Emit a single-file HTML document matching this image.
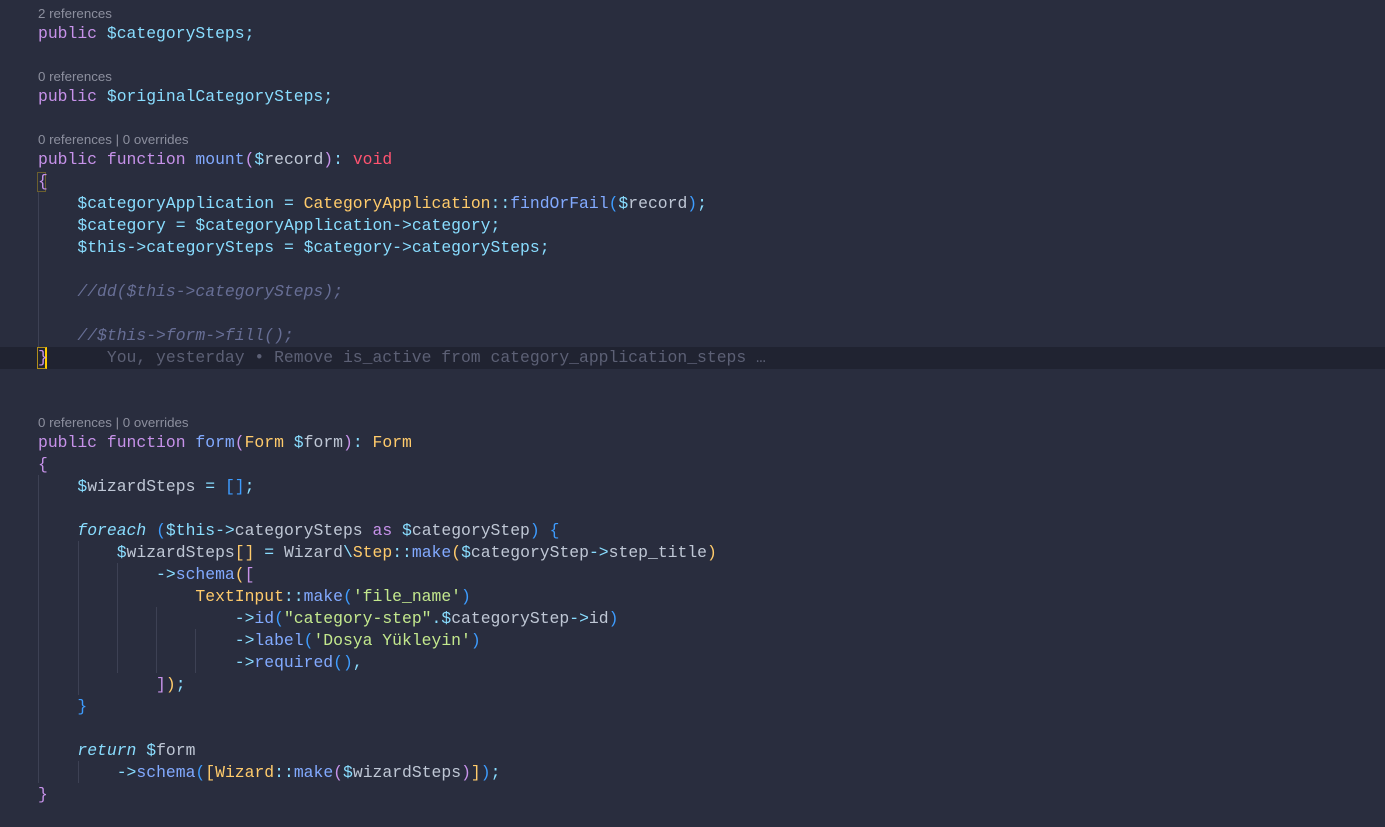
<!DOCTYPE html>
<html><head><meta charset="utf-8"><style>
html,body{margin:0;padding:0;background:#292d3e;width:1385px;height:827px;overflow:hidden}
.l{position:absolute;left:38px;height:22px;line-height:22px;font-family:"Liberation Mono",monospace;font-size:16.4px;white-space:pre;color:#bfc7d5;margin-top:1px}
.c{position:absolute;left:38px;height:19px;line-height:19px;font-family:"Liberation Sans",sans-serif;font-size:13.3px;color:#8c8f9e;white-space:pre}
.k{color:#c792ea}.v{color:#89ddff}.w{color:#bcc4dc}.f{color:#82aaff}.r{color:#ff5370}.y{color:#ffcb6b}.s{color:#c3e88d}.o{color:#89ddff}
.cm{color:#676e95;font-style:italic}.it{font-style:italic;color:#89ddff}.p{color:#c792ea}.b{color:#3d9cff}.g{color:#5c6075}
.guide{position:absolute;width:1px;background:#3d4154}
</style></head><body>
<div style="position:absolute;left:0;top:347px;width:1385px;height:22px;background:#202331"></div>
<div class="guide" style="left:38px;top:192px;height:155px"></div>
<div class="guide" style="left:38px;top:475px;height:308px"></div>
<div class="guide" style="left:78px;top:541px;height:154px"></div>
<div class="guide" style="left:78px;top:761px;height:22px"></div>
<div class="guide" style="left:117px;top:563px;height:110px"></div>
<div class="guide" style="left:156px;top:607px;height:66px"></div>
<div class="guide" style="left:195px;top:629px;height:44px"></div>
<div style="position:absolute;left:37px;top:172px;width:9px;height:20px;border:1px solid #6b5f2e;box-sizing:border-box"></div>
<div style="position:absolute;left:37px;top:347px;width:10px;height:22px;border:1px solid #b08d1a;border-right:2px solid #ffcc00;box-sizing:border-box"></div>

<div class="c" style="top:4px">2 references</div>
<div class="l" style="top:22px"><span class="k">public</span> <span class="v">$categorySteps</span><span class="o">;</span></div>
<div class="c" style="top:67px">0 references</div>
<div class="l" style="top:85px"><span class="k">public</span> <span class="v">$originalCategorySteps</span><span class="o">;</span></div>
<div class="c" style="top:130px">0 references | 0 overrides</div>
<div class="l" style="top:148px"><span class="k">public function</span> <span class="f">mount</span><span class="p">(</span><span class="v">$</span>record<span class="p">)</span><span class="o">:</span> <span class="r">void</span></div>
<div class="l" style="top:170px"><span class="p">{</span></div>
<div class="l" style="top:192px">    <span class="v">$categoryApplication</span> <span class="o">=</span> <span class="y">CategoryApplication</span><span class="o">::</span><span class="f">findOrFail</span><span class="b">(</span><span class="v">$</span>record<span class="b">)</span><span class="o">;</span></div>
<div class="l" style="top:214px">    <span class="v">$category</span> <span class="o">=</span> <span class="v">$categoryApplication-></span><span class="v">category</span><span class="o">;</span></div>
<div class="l" style="top:236px">    <span class="v">$this-></span><span class="v">categorySteps</span> <span class="o">=</span> <span class="v">$category-></span><span class="v">categorySteps</span><span class="o">;</span></div>
<div class="l" style="top:280px">    <span class="cm">//dd($this->categorySteps);</span></div>
<div class="l" style="top:324px">    <span class="cm">//$this->form->fill();</span></div>
<div class="l" style="top:346px"><span class="p">}</span>      <span class="g">You, yesterday • Remove is_active from category_application_steps …</span></div>

<div class="c" style="top:413px">0 references | 0 overrides</div>
<div class="l" style="top:431px"><span class="k">public function</span> <span class="f">form</span><span class="p">(</span><span class="y">Form</span> <span class="v">$</span>form<span class="p">)</span><span class="o">:</span> <span class="y">Form</span></div>
<div class="l" style="top:453px"><span class="p">{</span></div>
<div class="l" style="top:475px">    <span class="v">$</span>wizardSteps <span class="o">=</span> <span class="b">[]</span><span class="o">;</span></div>
<div class="l" style="top:519px">    <span class="it">foreach</span> <span class="b">(</span><span class="v">$this-></span>categorySteps <span class="k">as</span> <span class="v">$</span>categoryStep<span class="b">)</span> <span class="b">{</span></div>
<div class="l" style="top:541px">        <span class="v">$</span>wizardSteps<span class="y">[]</span> <span class="o">=</span> Wizard<span class="o">\</span><span class="y">Step</span><span class="o">::</span><span class="f">make</span><span class="y">(</span><span class="v">$</span>categoryStep<span class="o">-></span>step_title<span class="y">)</span></div>
<div class="l" style="top:563px">            <span class="o">-></span><span class="f">schema</span><span class="y">(</span><span class="p">[</span></div>
<div class="l" style="top:585px">                <span class="y">TextInput</span><span class="o">::</span><span class="f">make</span><span class="b">(</span><span class="s">'file_name'</span><span class="b">)</span></div>
<div class="l" style="top:607px">                    <span class="o">-></span><span class="f">id</span><span class="b">(</span><span class="s">"category-step"</span><span class="o">.</span><span class="v">$</span>categoryStep<span class="o">-></span>id<span class="b">)</span></div>
<div class="l" style="top:629px">                    <span class="o">-></span><span class="f">label</span><span class="b">(</span><span class="s">'Dosya Yükleyin'</span><span class="b">)</span></div>
<div class="l" style="top:651px">                    <span class="o">-></span><span class="f">required</span><span class="b">()</span><span class="o">,</span></div>
<div class="l" style="top:673px">            <span class="p">]</span><span class="y">)</span><span class="o">;</span></div>
<div class="l" style="top:695px">    <span class="b">}</span></div>
<div class="l" style="top:739px">    <span class="it">return</span> <span class="v">$</span>form</div>
<div class="l" style="top:761px">        <span class="o">-></span><span class="f">schema</span><span class="b">(</span><span class="y">[Wizard</span><span class="o">::</span><span class="f">make</span><span class="p">(</span><span class="v">$</span>wizardSteps<span class="p">)</span><span class="y">]</span><span class="b">)</span><span class="o">;</span></div>
<div class="l" style="top:783px"><span class="p">}</span></div>
</body></html>
